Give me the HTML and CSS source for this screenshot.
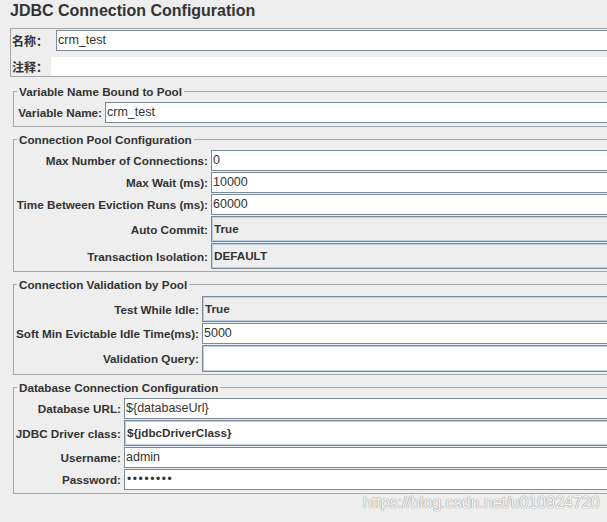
FILE: index.html
```html
<!DOCTYPE html>
<html lang="en">
<head>
<meta charset="utf-8">
<title>JDBC Connection Configuration</title>
<link rel="stylesheet" href="styles.css">
</head>
<body>
<div class="page">
  <h1 class="title">JDBC Connection Configuration</h1>

  <div class="namebox">
    <div class="nrow nrow-name">
      <span class="nlabel">名称：</span>
      <div class="field">crm_test</div>
    </div>
    <div class="nrow nrow-comment">
      <span class="nlabel">注释：</span>
      <div class="field blank"></div>
    </div>
  </div>

  <fieldset class="group g1">
    <legend>Variable Name Bound to Pool</legend>
    <div class="rows">
      <span class="lbl">Variable Name:</span><div class="field">crm_test</div>
    </div>
  </fieldset>

  <fieldset class="group g2">
    <legend>Connection Pool Configuration</legend>
    <div class="rows">
      <span class="lbl">Max Number of Connections:</span><div class="field">0</div>
      <span class="lbl">Max Wait (ms):</span><div class="field">10000</div>
      <span class="lbl">Time Between Eviction Runs (ms):</span><div class="field">60000</div>
      <span class="lbl">Auto Commit:</span><div class="field combo">True</div>
      <span class="lbl">Transaction Isolation:</span><div class="field combo">DEFAULT</div>
    </div>
  </fieldset>

  <fieldset class="group g3">
    <legend>Connection Validation by Pool</legend>
    <div class="rows">
      <span class="lbl">Test While Idle:</span><div class="field combo">True</div>
      <span class="lbl">Soft Min Evictable Idle Time(ms):</span><div class="field">5000</div>
      <span class="lbl">Validation Query:</span><div class="field combo editable tall"></div>
    </div>
  </fieldset>

  <fieldset class="group g4">
    <legend>Database Connection Configuration</legend>
    <div class="rows">
      <span class="lbl">Database URL:</span><div class="field url">${databaseUrl}</div>
      <span class="lbl">JDBC Driver class:</span><div class="field combo editable">${jdbcDriverClass}</div>
      <span class="lbl">Username:</span><div class="field">admin</div>
      <span class="lbl">Password:</span><div class="field password">••••••••</div>
    </div>
  </fieldset>
</div>
<div class="watermark">https://blog.csdn.net/u010924720</div>
</body>
</html>
```

FILE: styles.css
```css
html, body {
  margin: 0;
  padding: 0;
  background: #eeeeee;
  overflow: hidden;
}

body {
  position: relative;
  width: 607px;
  height: 522px;
  font-family: "Liberation Sans", "Noto Sans CJK SC", Arial, sans-serif;
  color: #333333;
}

.page {
  box-sizing: border-box;
  width: 607px;
  padding-left: 10px;
}

.title {
  margin: 0;
  padding-top: 2px;
  height: 18px;
  font-size: 16px;
  line-height: 18px;
  font-weight: bold;
  color: #333333;
}

.namebox {
  margin-top: 8px;
  border: 1px solid #a6a6a6;
  border-right: none;
}

.nrow {
  display: flex;
  align-items: center;
}

.nlabel {
  box-sizing: border-box;
  padding-left: 1px;
  font-family: "Liberation Sans", "Noto Sans CJK SC", sans-serif;
  font-size: 12px;
  font-weight: bold;
  white-space: nowrap;
}

.nrow-name .nlabel {
  width: 45px;
}

.nrow-name .field {
  margin: 1px 0;
}

.nrow-comment {
  margin-top: 5px;
}

.nrow-comment .nlabel {
  width: 40px;
}

.field {
  flex: 1;
  min-width: 0;
  box-sizing: border-box;
  height: 21px;
  border: 1px solid #7a8a99;
  border-right: none;
  background: #ffffff;
  padding: 0 1px;
  font-size: 12.5px;
  line-height: 19px;
  color: #333333;
  white-space: nowrap;
  overflow: hidden;
}

.field.blank {
  height: 19px;
  border: none;
}

.field.combo {
  height: 26px;
  line-height: 24px;
  padding: 0 2px;
  background: #eeeeee;
  box-shadow: inset 0 1px 0 #b8cfe5, inset 1px 0 0 #b8cfe5, inset 0 -1px 0 #b8cfe5;
  font-size: 11.7px;
  font-weight: bold;
}

.field.combo.editable {
  background: #ffffff;
}

.field.tall {
  height: 27px;
}

.field.password {
  font-size: 12px;
  letter-spacing: 1.6px;
  padding-left: 2px;
}

.group {
  margin: 5px 0 0 3px;
  padding: 3px 0 2px 3px;
  border: 1px solid #a6a6a6;
  border-right: none;
  min-width: 0;
}

.group legend {
  padding: 0 2px;
  font-size: 11.7px;
  font-weight: bold;
  line-height: 15px;
}

.g1 {
  margin-top: 7px;
  padding-bottom: 3px;
}

.g3 {
  padding-top: 4px;
}

.g4 {
  padding-bottom: 3px;
}

.rows {
  display: grid;
  row-gap: 1px;
}

.g1 .rows { grid-template-columns: 88px minmax(0, 1fr); }
.g2 .rows { grid-template-columns: 194px minmax(0, 1fr); }
.g3 .rows { grid-template-columns: 185px minmax(0, 1fr); }
.g4 .rows { grid-template-columns: 107px minmax(0, 1fr); }

.lbl {
  display: flex;
  align-items: center;
  justify-content: flex-end;
  padding-right: 3px;
  font-size: 11.7px;
  font-weight: bold;
  white-space: nowrap;
}

.watermark {
  position: absolute;
  left: 363px;
  top: 494px;
  font-family: "Liberation Sans", Arial, sans-serif;
  font-size: 16px;
  line-height: 18px;
  color: #f8f8f8;
  text-shadow: 0 0 1px #8c8c8c, 0 0 1px #8c8c8c;
  white-space: nowrap;
}
```
